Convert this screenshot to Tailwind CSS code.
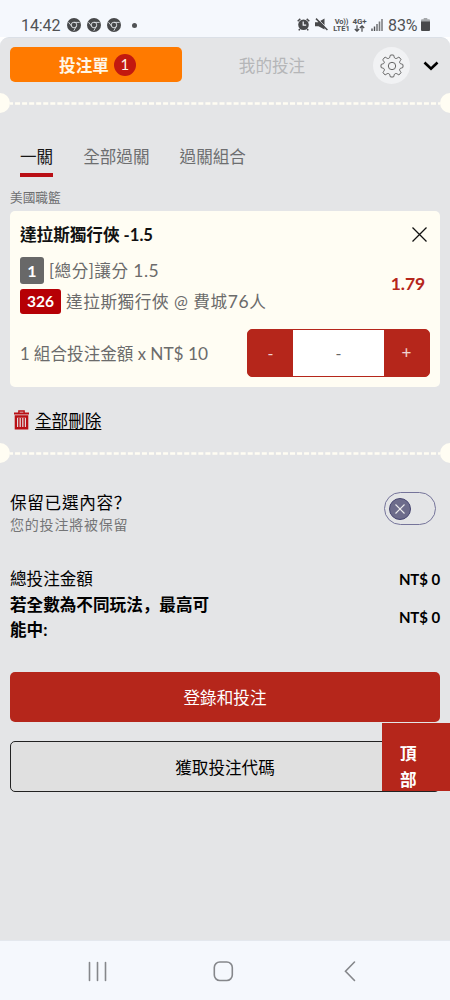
<!DOCTYPE html>
<html lang="zh-Hant">
<head>
<meta charset="utf-8">
<title>投注單</title>
<script src="https://cdn.jsdelivr.net/npm/@tailwindcss/browser@4"></script>
</head>
<body class="w-[450px] h-[1000px] overflow-hidden bg-[#f5f8fd] font-['Lato','Noto_Sans_CJK_TC',sans-serif] text-[16.6px] text-black">
<div class="flex flex-col h-[1000px]">
  <!-- status bar -->
  <header class="h-[37px] shrink-0 flex items-start pt-[13px] pl-[21px] pr-[20px] text-[#505254] font-['Roboto',sans-serif]">
    <span class="text-[16px] leading-[25px] w-[46px] tracking-[-0.1px]">14:42</span>
    <div class="flex gap-[6px] pt-[5px]">
      <svg class="size-[14px]" viewBox="0 0 14 14"><circle cx="7" cy="7" r="7" fill="#48494b"/><g fill="none" stroke="#dfe2e6" stroke-width=".9"><circle cx="7" cy="7" r="2.8"/><path d="M12.600 4.400H7M1.500 4.200l3.200 4M9.300 8.300L6.800 12.800"/></g></svg>
      <svg class="size-[14px]" viewBox="0 0 14 14"><circle cx="7" cy="7" r="7" fill="#48494b"/><g fill="none" stroke="#dfe2e6" stroke-width=".9"><circle cx="7" cy="7" r="2.8"/><path d="M12.600 4.400H7M1.500 4.200l3.200 4M9.300 8.300L6.800 12.800"/></g></svg>
      <svg class="size-[14px]" viewBox="0 0 14 14"><circle cx="7" cy="7" r="7" fill="#48494b"/><g fill="none" stroke="#dfe2e6" stroke-width=".9"><circle cx="7" cy="7" r="2.8"/><path d="M12.600 4.400H7M1.500 4.200l3.200 4M9.300 8.300L6.800 12.800"/></g></svg>
    </div>
    <span class="size-[5px] rounded-full bg-[#505254] ml-[11px] mt-[10px]"></span>
    <div class="ml-auto flex items-start">
      <svg class="w-[13px] h-[13px] mt-[5px]" viewBox="0 0 13 13"><path d="M.7 3.2L3.3.9M12.3 3.2L9.7.9M2.8 11l-1 1.4M10.2 11l1 1.4" stroke="#48494b" stroke-width="1.5"/><circle cx="6.5" cy="6.8" r="5.3" fill="#48494b"/><path d="M6.2 3.6v3.6h3" fill="none" stroke="#f5f8fd" stroke-width="1.2"/></svg>
      <svg class="w-[13px] h-[13px] ml-[5px] mt-[5px]" viewBox="0 0 13 13"><path d="M0 4.3h3L9.5.5v11L3.5 8.2H0z" fill="#48494b"/><path d="M2.200.4l11.3 11.3" stroke="#f5f8fd" stroke-width="1"/><path d="M1 .6l11.400 11.400" stroke="#48494b" stroke-width="1.500"/></svg>
      <div class="w-[17px] ml-[5px] mt-[5px] text-[7.500px] leading-[7px] font-bold flex flex-col items-center whitespace-nowrap"><span class="tracking-[-0.2px]">Vo))</span><span>LTE1</span></div>
      <div class="w-[15px] ml-[2px] mt-[5px] text-[8px] leading-[7px] font-bold flex flex-col items-center whitespace-nowrap"><span class="tracking-[-0.2px]">4G+</span>
        <svg class="w-[11px] h-[7px]" viewBox="0 0 11 7"><path d="M3 .3v5.7M.8 4L3 6.2 5.2 4M8 6.8V1M5.8 3L8 .8 10.2 3" fill="none" stroke="#48494b" stroke-width="1.2"/></svg></div>
      <svg class="w-[12px] h-[12px] ml-[4px] mt-[6px]" viewBox="0 0 12 12"><path d="M1 12V9.5M3.5 12V7.5" stroke="#505254" stroke-width="1.4"/><path d="M6 12V5M8.5 12V2.5" stroke="#77797b" stroke-width="1.6"/><path d="M11 12V0" stroke="#77797b" stroke-width="1.5"/></svg>
      <span class="text-[16px] leading-[25px] ml-[5px] w-[31px] tracking-[-0.1px]">83%</span>
      <svg class="w-[9px] h-[13px] ml-[2px] mt-[5px]" viewBox="0 0 9 13"><path d="M2.7 0h3.6v1.3H8a1 1 0 011 1V4H0V2.300a1 1 0 011-1h1.700z" fill="#a5a8ab"/><path d="M0 3.500h9V12a1 1 0 01-1 1H1a1 1 0 01-1-1z" fill="#48494b"/></svg>
    </div>
  </header>

  <div class="h-[903px] shrink-0 bg-white">
  <main class="relative h-[903px] bg-[#e4e5e7] rounded-t-[9px] border-t border-[#dbe0e7] overflow-hidden">
    <!-- slip tabs -->
    <div class="flex items-start h-[55px] pt-[9px] pl-[10px]">
      <button class="w-[172px] h-[35px] rounded-[5px] bg-[#ff7a00] text-[#fff6e6] font-bold flex items-center justify-center gap-[5px] pl-[3px]"><span class="pt-[3px]">投注單</span><span class="size-[22px] rounded-full bg-[#c2190f] font-normal text-[15px] flex items-center justify-center">1</span></button>
      <div class="w-[191px] h-[38px] flex items-center justify-center text-[#b5b6b8] pr-[11px]">我的投注</div>
      <span class="size-[37px] rounded-full bg-[#f1f2f4] flex items-center justify-center">
        <svg class="size-[24px]" viewBox="0 0 24 24" fill="none" stroke="#646464" stroke-width="1" stroke-linejoin="round"><circle cx="12" cy="12" r="3.700"/><path d="M10.300 1.200q1.700-.5 3.400 0c.5 1.500.3 2.700 1.600 3.200s2-.6 3.500-1.200q1.500.8 2.200 2.200c-.6 1.500-1.800 2.200-1.300 3.400s1.600 1 3.100 1.600q.5 1.600 0 3.200c-1.500.6-2.600.4-3.100 1.600s.7 1.900 1.300 3.400q-.7 1.400-2.200 2.200c-1.500-.6-2.200-1.700-3.500-1.200s-1.100 1.700-1.600 3.200q-1.700.5-3.400 0c-.5-1.500-.3-2.700-1.600-3.200s-2 .6-3.500 1.200q-1.500-.8-2.200-2.200c.6-1.500 1.800-2.200 1.300-3.400s-1.600-1-3.100-1.600q-.5-1.600 0-3.200c1.500-.6 2.600-.4 3.100-1.600S2.600 6.900 3 5.400q.7-1.400 2.200-2.200c1.500.6 2.200 1.700 3.500 1.200s1.100-1.700 1.600-3.200z"/></svg>
      </span>
      <svg class="w-[16px] h-[10px] ml-[13px] mt-[14px]" viewBox="0 0 16 10"><path d="M1.500 1.500L8 7.800l6.500-6.300" fill="none" stroke="#000" stroke-width="2.600"/></svg>
    </div>
    <!-- perforation -->
    <div class="flex items-center h-[20px] w-[470px] -ml-[10px]">
      <span class="size-[20px] rounded-full bg-[#fffdf3] shrink-0"></span>
      <svg class="w-[430px] h-[3px]"><path d="M0 1.500h430" stroke="#fffdf3" stroke-width="2.600" stroke-dasharray="5 2.050" stroke-dashoffset="2"/></svg>
      <span class="size-[20px] rounded-full bg-[#fffdf3] shrink-0"></span>
    </div>
    <!-- bet type tabs -->
    <nav class="flex gap-[30px] pl-[20px] mt-[31px] h-[33px] leading-[26px] text-[#6d6e70]">
      <span class="h-[33px] border-b-[4px] border-[#b90f15] text-[#161616]">一關</span><span>全部過關</span><span>過關組合</span>
    </nav>
    <div class="pl-[10px] mt-[10px] h-[24px] leading-[20px] text-[12.7px] text-[#6d6e70]">美國職籃</div>
    <!-- selection card -->
    <section class="mx-[10px] h-[176px] rounded-[5px] bg-[#fffdf3] px-[10px] pt-[11px] text-[#6b6b6b]">
      <div class="flex justify-between items-center h-[25px] text-[#111] font-bold pr-[3px]"><h2 class="pt-[2px]">達拉斯獨行俠 -1.5</h2>
        <svg class="size-[15px]" viewBox="0 0 15 15"><path d="M.5.5l14 14M14.500.5l-14 14" stroke="#111" stroke-width="1.300"/></svg></div>
      <div class="flex justify-between items-center h-[57px] mt-[10px] pr-[5px]">
        <div class="flex flex-col gap-[5px]">
          <div class="flex items-center gap-[5px] tracking-[0.5px]"><span class="w-[24px] h-[27px] rounded-[3px] bg-[#686868] text-white font-bold text-[16px] tracking-normal flex items-center justify-center">1</span><span class="-mb-[2px]">[總分]讓分 <span class="text-[17.500px] leading-5">1.5</span></span></div>
          <div class="flex items-center gap-[5px] h-[25px] tracking-[0.600px]"><span class="w-[41px] h-[25px] rounded-[3px] bg-[#b60005] text-white font-bold text-[15.500px] tracking-normal flex items-center justify-center">326</span><span class="-mb-[2px]">達拉斯獨行俠 @ 費城<span class="text-[17.500px] leading-5">76</span>人</span></div>
        </div>
        <b class="text-[17.500px] text-[#b5261b] -mt-[3px] tracking-[-0.1px]">1.79</b>
      </div>
      <div class="flex justify-between items-center mt-[15px]">
        <span class="pt-[2px]">1 組合投注金額 x <span class="text-[17.300px] leading-5">NT$ 10</span></span>
        <div class="flex w-[183px] h-[48px] rounded-[5px] overflow-hidden border border-[#b5261b] bg-[#b5261b] text-white/80 text-[16px]">
          <span class="w-[45px] flex items-center justify-center">-</span><span class="w-[91px] bg-white text-[#666] flex items-center justify-center">-</span><span class="w-[45px] flex items-center justify-center text-[17px] pb-px">+</span>
        </div>
      </div>
    </section>
    <div class="flex items-center gap-[6px] pl-[14px] mt-[21px] h-[26px]">
      <svg class="w-[15px] h-[20px] -mt-[3px]" viewBox="0 0 16 20" preserveAspectRatio="none" fill="none" stroke="#b90f15"><path d="M0 3.500h16" stroke-width="2"/><path d="M5.200 3V1h5.600v2" stroke-width="1.500"/><path d="M2 6.500h12v11.800H2z" stroke-width="2.500"/><path d="M5.200 8v9M8 8v9M10.800 8v9" stroke-width="1.500"/></svg>
      <a class="underline decoration-1 underline-offset-2">全部刪除</a>
    </div>
    <div class="flex items-center h-[20px] w-[470px] -ml-[10px] mt-[9px]">
      <span class="size-[20px] rounded-full bg-[#fffdf3] shrink-0"></span>
      <svg class="w-[430px] h-[3px]"><path d="M0 1.500h430" stroke="#fffdf3" stroke-width="2.600" stroke-dasharray="5 2.050" stroke-dashoffset="2"/></svg>
      <span class="size-[20px] rounded-full bg-[#fffdf3] shrink-0"></span>
    </div>
    <div class="flex justify-between pl-[10px] pr-[14px] mt-[27px] h-[48px]">
      <div><div class="h-[25px] leading-[25px] tracking-[0.700px]">保留已選內容<span class="font-['Noto_Sans_CJK_SC',sans-serif]" lang="zh-Hans">？</span></div><div class="text-[14px] leading-[20px] tracking-[0.800px] text-[#747577]">您的投注將被保留</div></div>
      <div class="w-[52px] h-[33px] mt-[2px] rounded-full border-[1.500px] border-[#75749a] flex items-center pl-[4px]"><span class="size-[22px] rounded-full bg-[#6d6c8b] border-[1.500px] border-[#464570] flex items-center justify-center"><svg class="size-[10px]" viewBox="0 0 10 10"><path d="M.5.5l9 9M9.500.5l-9 9" stroke="#eee" stroke-width="1.100"/></svg></span></div>
    </div>
    <div class="flex justify-between items-center px-[10px] mt-[29px] h-[25px]"><span>總投注金額</span><b class="text-[15px] tracking-[-0.1px]">NT$ 0</b></div>
    <div class="flex justify-between items-center px-[10px] h-[51px]"><b class="w-[205px] leading-[25.500px]">若全數為不同玩法<span class="font-['Noto_Sans_CJK_SC',sans-serif]" lang="zh-Hans">，</span>最高可能中:</b><b class="text-[15px] tracking-[-0.1px]">NT$ 0</b></div>
    <button class="block w-[430px] h-[50px] mx-[10px] mt-[29px] rounded-[5px] bg-[#b5261b] text-white pt-[2px]">登錄和投注</button>
    <button class="block w-[430px] h-[51px] mx-[10px] mt-[19px] rounded-[5px] border-[1.500px] border-[#222] bg-[#e0e0e0] pt-[3px]">獲取投注代碼</button>
    <div class="absolute right-0 top-[685px] w-[68px] h-[68px] bg-[#b5261b] text-white font-bold leading-[25.500px] pl-[18px] pt-[19px] overflow-hidden"><div class="w-[17px]">頂部</div></div>
  </main>
  </div>
  <!-- system navigation -->
  <footer class="h-[60px] shrink-0 flex items-start border-t border-[#e4e8ee] text-[#85878b]">
    <svg class="w-[450px] h-[59px]" viewBox="0 941 450 59" fill="none" stroke="#85878b" stroke-width="1.600" stroke-linecap="round"><path d="M89.500 962.500v18M97.500 962.500v18M105.500 962.500v18"/><rect x="214.300" y="962" width="18" height="18.500" rx="5.500"/><path d="M354.500 962l-9 9.300 9 9.200"/></svg>
  </footer>
</div>
</body>
</html>
